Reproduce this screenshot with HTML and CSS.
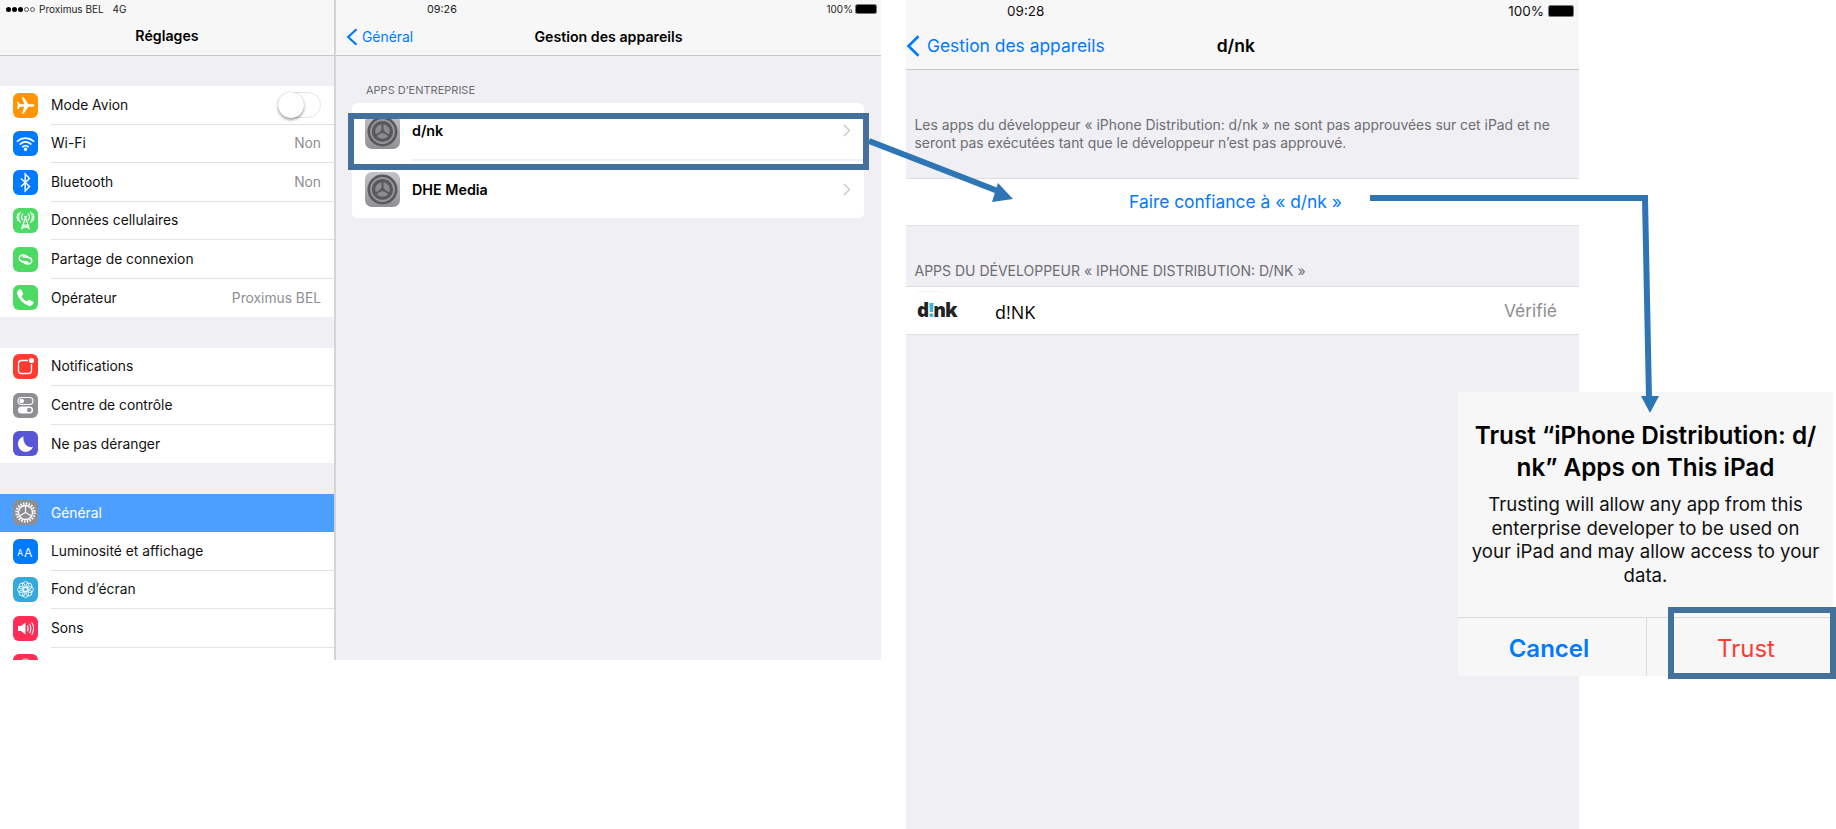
FILE: index.html
```html
<!DOCTYPE html>
<html lang="fr">
<head>
    <meta charset="UTF-8">
    <meta name="viewport" content="width=device-width, initial-scale=1.0">
    <title>Gestion des appareils</title>
    <link rel="stylesheet" href="styles.css">
</head>
<body>
    <div class="page">
        <!-- first screenshot: iPad settings -->
        <div class="tablet">
            <aside class="sidebar">
                <header class="bar sidebar-bar">
                    <div class="status">
                        <span class="signal"><i></i><i></i><i></i><i class="off"></i><i class="off"></i></span>
                        <span>Proximus BEL</span>
                        <span class="network">4G</span>
                    </div>
                    <div class="bar-title">Réglages</div>
                </header>

                <div class="group">
                    <div class="row">
                        <svg class="icon orange" viewBox="0 0 25 25"><path fill="#fff" d="M21.500 12.500c0-.8-1-1.300-2.200-1.300h-3.900L10.600 4.300H8.900l2.400 6.900H7L5.400 9H4l.9 3.500L4 16h1.400L7 13.800h4.300l-2.400 6.900h1.700l4.800-6.900h3.900c1.200 0 2.200-.5 2.200-1.300z"/></svg>
                        <div class="row-body"><span>Mode Avion</span><span class="switch"></span></div>
                    </div>
                    <div class="row">
                        <svg class="icon blue" viewBox="0 0 25 25" fill="none" stroke="#fff" stroke-width="1.700" stroke-linecap="round"><path d="M4.500 10.200c4.700-4 11.300-4 16 0"/><path d="M7.200 13c3.200-2.500 7.400-2.500 10.600 0"/><path d="M9.800 15.700c1.700-1.200 3.700-1.200 5.400 0"/><circle cx="12.500" cy="18.300" r=".9" fill="#fff"/></svg>
                        <div class="row-body"><span>Wi-Fi</span><span class="value">Non</span></div>
                    </div>
                    <div class="row">
                        <svg class="icon blue" viewBox="0 0 25 25" fill="none" stroke="#fff" stroke-width="1.500"><path d="M8 8.500l8.500 8-4.300 4.500V4l4.300 4.500-8.500 8"/></svg>
                        <div class="row-body"><span>Bluetooth</span><span class="value">Non</span></div>
                    </div>
                    <div class="row">
                        <svg class="icon green" viewBox="0 0 25 25" fill="none" stroke="#fff" stroke-width="1.100" stroke-linecap="round"><path d="M12.500 9.500L8.700 21M12.500 9.500L16.300 21M10 17h5M9.200 20l6.600-2.500M15.800 20l-6.600-2.500"/><circle cx="12.500" cy="9" r="1.300" fill="#fff" stroke="none"/><path d="M9.800 5.800c-1.400 1.800-1.400 4.600 0 6.400M15.200 5.800c1.400 1.800 1.400 4.600 0 6.400M7.500 4c-2.400 3-2.400 7.500 0 10.500M17.500 4c2.400 3 2.400 7.500 0 10.500M5.300 5.500c-1.500 2.300-1.500 5.200 0 7.500M19.700 5.500c1.500 2.300 1.500 5.200 0 7.500"/></svg>
                        <div class="row-body"><span>Données cellulaires</span></div>
                    </div>
                    <div class="row">
                        <svg class="icon green" viewBox="0 0 25 25" fill="none" stroke="#fff" stroke-width="1.500" stroke-linecap="round"><path d="M14.500 9.800c-2-2-5.500-2.700-7.300-.8-1.800 1.900-.9 4.300 1.100 5.200 2 .9 5.400.3 6.700 1.200"/><path d="M10.500 15.200c2 2 5.500 2.700 7.300.8 1.800-1.900.9-4.300-1.100-5.200-2-.9-5.400-.3-6.700-1.200"/></svg>
                        <div class="row-body"><span>Partage de connexion</span></div>
                    </div>
                    <div class="row">
                        <svg class="icon green" viewBox="0 0 25 25"><path fill="#fff" d="M8.200 4.800l2 3.800c.2.400.1.800-.2 1.100l-1.200 1.100c-.2.200-.2.400-.1.700.9 2 2.800 3.900 4.800 4.800.3.100.5.100.7-.1l1.100-1.200c.3-.3.700-.4 1.100-.2l3.800 2c.4.200.5.600.4 1-.4 1.200-1.200 2.300-2.300 2.800-1.100.5-2.500.3-4-.4-4.300-1.900-7.700-5.300-9.600-9.600-.7-1.500-.9-2.900-.4-4 .5-1.100 1.600-1.900 2.800-2.300.4-.1.800 0 1.100.5z"/></svg>
                        <div class="row-body"><span>Opérateur</span><span class="value">Proximus BEL</span></div>
                    </div>
                </div>

                <div class="group">
                    <div class="row">
                        <svg class="icon red" viewBox="0 0 25 25" fill="none"><rect x="5.500" y="6.500" width="13" height="13" rx="3" stroke="#fff" stroke-width="1.300"/><circle cx="18.500" cy="6.500" r="3.600" fill="#ff3b30"/><circle cx="18.500" cy="6.500" r="2.600" fill="#fff"/></svg>
                        <div class="row-body"><span>Notifications</span></div>
                    </div>
                    <div class="row">
                        <svg class="icon gray" viewBox="0 0 25 25" fill="none"><rect x="5" y="4.500" width="15" height="7" rx="3.500" stroke="#fff" stroke-width="1.100"/><circle cx="8.700" cy="8" r="2.300" fill="#fff"/><rect x="5" y="13.500" width="15" height="7" rx="3.500" fill="#fff"/><circle cx="16.300" cy="17" r="2.300" fill="#8e8e93"/></svg>
                        <div class="row-body"><span>Centre de contrôle</span></div>
                    </div>
                    <div class="row">
                        <svg class="icon indigo" viewBox="0 0 25 25"><path fill="#fff" d="M10.500 5.500a7.800 7.800 0 1 0 9.500 10.300c-4.700 1.600-10.400-2.800-9.500-10.300z"/></svg>
                        <div class="row-body"><span>Ne pas déranger</span></div>
                    </div>
                </div>

                <div class="group">
                    <div class="row row-selected">
                        <svg class="icon gray" viewBox="0 0 25 25" fill="none" stroke="#fff"><circle cx="12.500" cy="12.500" r="9" stroke-width="2.400" stroke-dasharray="1.500 1.330"/><circle cx="12.500" cy="12.500" r="7" stroke-width="1.300"/><path stroke-width="1.100" d="M12.500 12.500V5.500M12.500 12.500l6.100 3.500M12.500 12.500l-6.100 3.500"/></svg>
                        <div class="row-body"><span>Général</span></div>
                    </div>
                    <div class="row">
                        <svg class="icon blue" viewBox="0 0 25 25"><text class="icon-text" x="4.200" y="17" font-size="8.500">A</text><text class="icon-text" x="11" y="17.500" font-size="12">A</text></svg>
                        <div class="row-body"><span>Luminosité et affichage</span></div>
                    </div>
                    <div class="row">
                        <svg class="icon teal" viewBox="0 0 25 25" fill="none" stroke="#fff" stroke-width=".9"><circle cx="12.500" cy="7.700" r="3"/><circle cx="12.500" cy="17.300" r="3"/><circle cx="7.700" cy="12.500" r="3"/><circle cx="17.300" cy="12.500" r="3"/><circle cx="9.100" cy="9.100" r="3"/><circle cx="15.900" cy="9.100" r="3"/><circle cx="9.100" cy="15.900" r="3"/><circle cx="15.900" cy="15.900" r="3"/><circle cx="12.500" cy="12.500" r="2.500"/></svg>
                        <div class="row-body"><span>Fond d’écran</span></div>
                    </div>
                    <div class="row">
                        <svg class="icon pink" viewBox="0 0 25 25" fill="none" stroke="#fff" stroke-linecap="round"><path fill="#fff" stroke="none" d="M5 10h3l4.500-3.500v12L8 15H5z"/><path stroke-width="1.100" d="M14.500 10c.9 1.500.9 3.500 0 5M16.700 8.300c1.500 2.600 1.500 5.800 0 8.400M18.900 6.800c2.100 3.500 2.100 7.900 0 11.400"/></svg>
                        <div class="row-body"><span>Sons</span></div>
                    </div>
                    <div class="row">
                        <svg class="icon pink" viewBox="0 0 25 25"><circle cx="12.500" cy="10" r="5" fill="none" stroke="#fff"/></svg>
                        <div class="row-body"></div>
                    </div>
                </div>
            </aside>

            <main class="detail">
                <header class="bar">
                    <div class="status status-detail">
                        <span class="time">09:26</span>
                        <span class="battery-text">100%</span>
                        <span class="battery"></span>
                    </div>
                    <div class="bar-nav">
                        <a class="back">
                            <svg class="back-arrow" viewBox="0 0 12 18" fill="none" stroke="#007aff" stroke-width="2.200"><path d="M10.500 1.200L2.200 9l8.300 7.800"/></svg>
                            Général
                        </a>
                        <div class="bar-title">Gestion des appareils</div>
                    </div>
                </header>

                <div class="section-label">APPS D’ENTREPRISE</div>
                <div class="card">
                    <div class="card-row">
                        <svg class="app-icon" viewBox="0 0 35 35">
                            <defs>
                                <linearGradient id="steel" x1="0" y1="0" x2="0" y2="1">
                                    <stop offset="0" stop-color="#c4c4c6"/>
                                    <stop offset="1" stop-color="#909094"/>
                                </linearGradient>
                                <symbol id="settings-app" viewBox="0 0 35 35">
                                    <rect width="35" height="35" rx="7" fill="url(#steel)"/>
                                    <circle cx="17.500" cy="17.500" r="15" fill="#59595c"/>
                                    <circle cx="17.500" cy="17.500" r="11.500" fill="none" stroke="#97979a" stroke-width="1.800"/>
                                    <circle cx="17.500" cy="17.500" r="8" fill="#8d8d90" stroke="#59595c" stroke-width="1.500"/>
                                    <path fill="none" stroke="#59595c" stroke-width="2" d="M17.500 17.500V9.500M17.500 17.500l6.900 4M17.500 17.500l-6.900 4"/>
                                    <circle cx="17.500" cy="17.500" r="2" fill="#59595c"/>
                                </symbol>
                            </defs>
                            <use href="#settings-app"/>
                        </svg>
                        <div class="card-body">
                            <span>d/nk</span>
                            <svg class="chevron" viewBox="0 0 8 13" fill="none" stroke="#c7c7cc" stroke-width="1.300"><path d="M1 1l5.500 5.500L1 12"/></svg>
                        </div>
                    </div>
                    <div class="card-row">
                        <svg class="app-icon" viewBox="0 0 35 35"><use href="#settings-app"/></svg>
                        <div class="card-body">
                            <span>DHE Media</span>
                            <svg class="chevron" viewBox="0 0 8 13" fill="none" stroke="#c7c7cc" stroke-width="1.300"><path d="M1 1l5.500 5.500L1 12"/></svg>
                        </div>
                    </div>
                </div>
            </main>
        </div>

        <!-- second screenshot: developer page -->
        <div class="phone">
            <header class="bar phone-bar">
                <div class="status phone-status">
                    <span class="time">09:28</span>
                    <span class="battery-text">100%</span>
                    <span class="battery"></span>
                </div>
                <div class="phone-nav">
                    <a class="back">
                        <svg class="back-arrow" viewBox="0 0 14 22" fill="none" stroke="#007aff" stroke-width="2.600"><path d="M12.500 1.200L2.500 11l10 9.800"/></svg>
                        Gestion des appareils
                    </a>
                    <div class="bar-title">d/nk</div>
                </div>
            </header>

            <p class="phone-text">Les apps du développeur « iPhone Distribution: d/nk » ne sont pas approuvées sur cet iPad et ne<br>seront pas exécutées tant que le développeur n’est pas approuvé.</p>
            <div class="trust-row">Faire confiance à « d/nk »</div>
            <div class="phone-label">APPS DU DÉVELOPPEUR « IPHONE DISTRIBUTION: D/NK »</div>
            <div class="app-row">
                <div class="logo-box"><span class="logo">d<span class="logo-dot">!</span>nk</span></div>
                <span class="app-name">d!NK</span>
                <span class="verified">Vérifié</span>
            </div>
        </div>

        <!-- annotations on top of the screenshots -->
        <div class="alert">
            <div class="alert-title">Trust “iPhone Distribution: d/<br>nk” Apps on This iPad</div>
            <div class="alert-text">Trusting will allow any app from this<br>enterprise developer to be used on<br>your iPad and may allow access to your<br>data.</div>
            <div class="alert-buttons">
                <div class="alert-cancel">Cancel</div>
                <div class="alert-trust">Trust</div>
            </div>
        </div>

        <div class="highlight highlight-row"></div>
        <div class="highlight highlight-trust"></div>

        <svg class="arrows" viewBox="0 0 1836 829" fill="none">
            <path stroke="#2e75b6" stroke-width="6" d="M869 141L1003 193"/>
            <path fill="#2e75b6" d="M998 183L1013 199L992 202z"/>
            <path stroke="#2e75b6" stroke-width="6" d="M1370 198H1645L1649 398"/>
            <path fill="#2e75b6" d="M1641 396H1659L1650 413z"/>
        </svg>
    </div>
</body>
</html>
```

FILE: styles.css
```css
* {
    box-sizing: border-box;
}
body {
    margin: 0;
    background: #fff;
    font-family: Inter, "Liberation Sans", sans-serif;
    color: #000;
}
.page {
    position: relative;
    display: flex;
    gap: 25px;
    width: 1836px;
    height: 829px;
    overflow: hidden;
}

/* shared bars */
.bar {
    height: 56px;
    background: #f7f7f7;
    border-bottom: 1px solid #c8c8cb;
}
.bar-title {
    font-size: 14.200px;
    font-weight: 600;
    text-align: center;
}
.status {
    display: flex;
    align-items: center;
    height: 18px;
    font-size: 10px;
    color: #222;
}
.back {
    display: flex;
    align-items: center;
    color: #007aff;
}
.battery {
    width: 20px;
    height: 8px;
    margin-left: 3px;
    background: #000;
    border-radius: 1.500px;
    box-shadow: 0 0 0 1px #777;
}

/* left screenshot */
.tablet {
    display: flex;
    width: 881px;
    height: 660px;
    overflow: hidden;
    background: #efeff4;
}
.sidebar {
    width: 336px;
    flex-shrink: 0;
    border-right: 2px solid #d4d4d8;
}
.sidebar-bar {
    margin-bottom: 30px;
}
.sidebar-bar .bar-title {
    margin-top: 9px;
}
.status .network {
    margin-left: 9px;
}
.signal {
    display: flex;
    gap: 1px;
    margin: 0 4px 0 6px;
}
.signal i {
    width: 5px;
    height: 5px;
    background: #000;
    border-radius: 50%;
}
.signal i.off {
    background: none;
    border: 1px solid #555;
}
.group {
    margin-bottom: 30.500px;
    background: #fff;
}
.row {
    display: flex;
    align-items: center;
    height: 38.500px;
    padding-left: 13px;
    font-size: 13.800px;
    color: #111;
}
.row-body {
    display: flex;
    flex: 1;
    align-items: center;
    justify-content: space-between;
    height: 100%;
    margin-left: 13px;
    padding-right: 13px;
    border-bottom: 1px solid #e2e2e5;
}
.group .row:last-child .row-body {
    border-bottom: none;
}
.row-selected {
    background: #4d9fff;
    color: #fff;
}
.row-selected .row-body {
    border-bottom: none;
}
.value {
    color: #8e8e93;
}
.icon {
    width: 25px;
    height: 25px;
    flex-shrink: 0;
    border-radius: 6px;
}
.icon-text {
    fill: #fff;
    font-family: Inter, sans-serif;
}
.orange { background: #ff9500; }
.blue { background: #007aff; }
.green { background: #4cd964; }
.red { background: #ff3b30; }
.gray { background: #8e8e93; }
.indigo { background: #5856d6; }
.teal { background: #34aadc; }
.pink { background: #ff2d55; }
.switch {
    position: relative;
    width: 43px;
    height: 26px;
    background: #fff;
    border: 1px solid #e5e5e5;
    border-radius: 13px;
}
.switch::before {
    content: "";
    position: absolute;
    left: -1px;
    top: -1px;
    width: 26px;
    height: 26px;
    background: #fff;
    border-radius: 50%;
    box-shadow: 0 2px 3px rgba(0, 0, 0, 0.35), 0 0 1px rgba(0, 0, 0, 0.3);
}

.detail {
    flex: 1;
}
.status-detail {
    padding-left: 91px;
    padding-right: 5px;
}
.status-detail .time {
    font-size: 10.800px;
}
.battery-text {
    margin-left: auto;
}
.bar-nav {
    display: grid;
    grid-template-columns: 1fr auto 1fr;
    align-items: center;
    height: 37px;
}
.bar-nav .back {
    gap: 4px;
    padding-left: 10px;
    font-size: 13.900px;
}
.back-arrow {
    width: 12px;
    height: 18px;
}
.section-label {
    margin: 27px 0 6px 30px;
    font-size: 11px;
    line-height: 14px;
    color: #6d6d72;
}
.card {
    margin: 0 17px 0 16px;
    background: #fff;
    border-radius: 5px;
    overflow: hidden;
}
.card-row {
    display: flex;
    align-items: center;
    height: 57.500px;
    padding-left: 13px;
    font-size: 14.300px;
    font-weight: 600;
}
.app-icon {
    width: 35px;
    height: 35px;
    flex-shrink: 0;
}
.card-body {
    display: flex;
    flex: 1;
    align-items: center;
    justify-content: space-between;
    height: 100%;
    margin-left: 12px;
    padding-right: 13px;
    border-bottom: 2px solid #f1f1f3;
}
.card-row:last-child .card-body {
    border-bottom: none;
}
.chevron {
    width: 8px;
    height: 13px;
}

/* right screenshot */
.phone {
    width: 673px;
    height: 829px;
    background: #efeff4;
}
.phone-bar {
    height: 70px;
}
.phone-status {
    height: 22px;
    padding: 0 6px 0 101px;
    font-size: 13.500px;
    color: #111;
}
.phone-status .battery {
    width: 24px;
    height: 10px;
    margin-left: 5px;
}
.phone-nav {
    display: flex;
    align-items: center;
    gap: 112px;
    height: 47px;
}
.phone-nav .back {
    gap: 7px;
    font-size: 17.400px;
}
.phone-nav .back-arrow {
    width: 14px;
    height: 22px;
}
.phone-nav .bar-title {
    font-size: 17.500px;
}
.phone-text {
    margin: 47px 0 26px;
    padding-left: 8.500px;
    font-size: 13.900px;
    line-height: 17.500px;
    color: #6d6d72;
}
.trust-row {
    height: 48px;
    padding-right: 14px;
    background: #fff;
    border-top: 1px solid #dedee2;
    border-bottom: 1px solid #e4e4e8;
    font-size: 17.400px;
    line-height: 46px;
    text-align: center;
    color: #007aff;
}
.phone-label {
    margin: 38px 0 8px;
    padding-left: 8.500px;
    font-size: 14px;
    line-height: 14px;
    color: #6d6d72;
}
.app-row {
    display: flex;
    align-items: center;
    height: 49px;
    padding: 0 22px 0 9px;
    background: #fff;
    border-top: 1px solid #dedee2;
    border-bottom: 1px solid #dedee2;
}
.logo-box {
    width: 31px;
    height: 40px;
    padding: 8px 0 0 2px;
    border-top: 1px solid #f2f2f2;
    border-radius: 8px;
}
.logo {
    font-family: "Open Sans", sans-serif;
    font-size: 19px;
    font-weight: 800;
    line-height: 20px;
    letter-spacing: -0.800px;
    white-space: nowrap;
    color: #222;
}
.logo-dot {
    color: #3ab6c8;
}
.app-name {
    margin-left: 49px;
    font-family: "Open Sans", sans-serif;
    font-size: 18px;
    line-height: 24px;
    padding-top: 2px;
}
.verified {
    margin-left: auto;
    font-size: 17.400px;
    color: #8e8e93;
}

/* alert over the right screenshot */
.alert {
    position: absolute;
    left: 1458px;
    top: 392px;
    display: flex;
    flex-direction: column;
    width: 375px;
    height: 284px;
    background: #f7f7f7;
    text-align: center;
}
.alert-title {
    margin-top: 27px;
    font-size: 24.300px;
    font-weight: 600;
    line-height: 32px;
}
.alert-text {
    margin-top: 10px;
    font-size: 18.600px;
    line-height: 23.600px;
    color: #111;
}
.alert-buttons {
    display: flex;
    margin-top: auto;
    height: 59px;
    border-top: 1px solid #dcdcdc;
    font-size: 24px;
    line-height: 62px;
}
.alert-cancel {
    width: 189px;
    padding-right: 6px;
    border-right: 1px solid #dcdcdc;
    font-weight: 600;
    color: #007aff;
}
.alert-trust {
    flex: 1;
    padding-left: 12px;
    color: #ff3b30;
}

.highlight {
    position: absolute;
    border: 6px solid #44709c;
}
.highlight-row {
    left: 348px;
    top: 113px;
    width: 521px;
    height: 57px;
}
.highlight-trust {
    left: 1668px;
    top: 607px;
    width: 168px;
    height: 72px;
}
.arrows {
    position: absolute;
    left: 0;
    top: 0;
    width: 1836px;
    height: 829px;
}
```
